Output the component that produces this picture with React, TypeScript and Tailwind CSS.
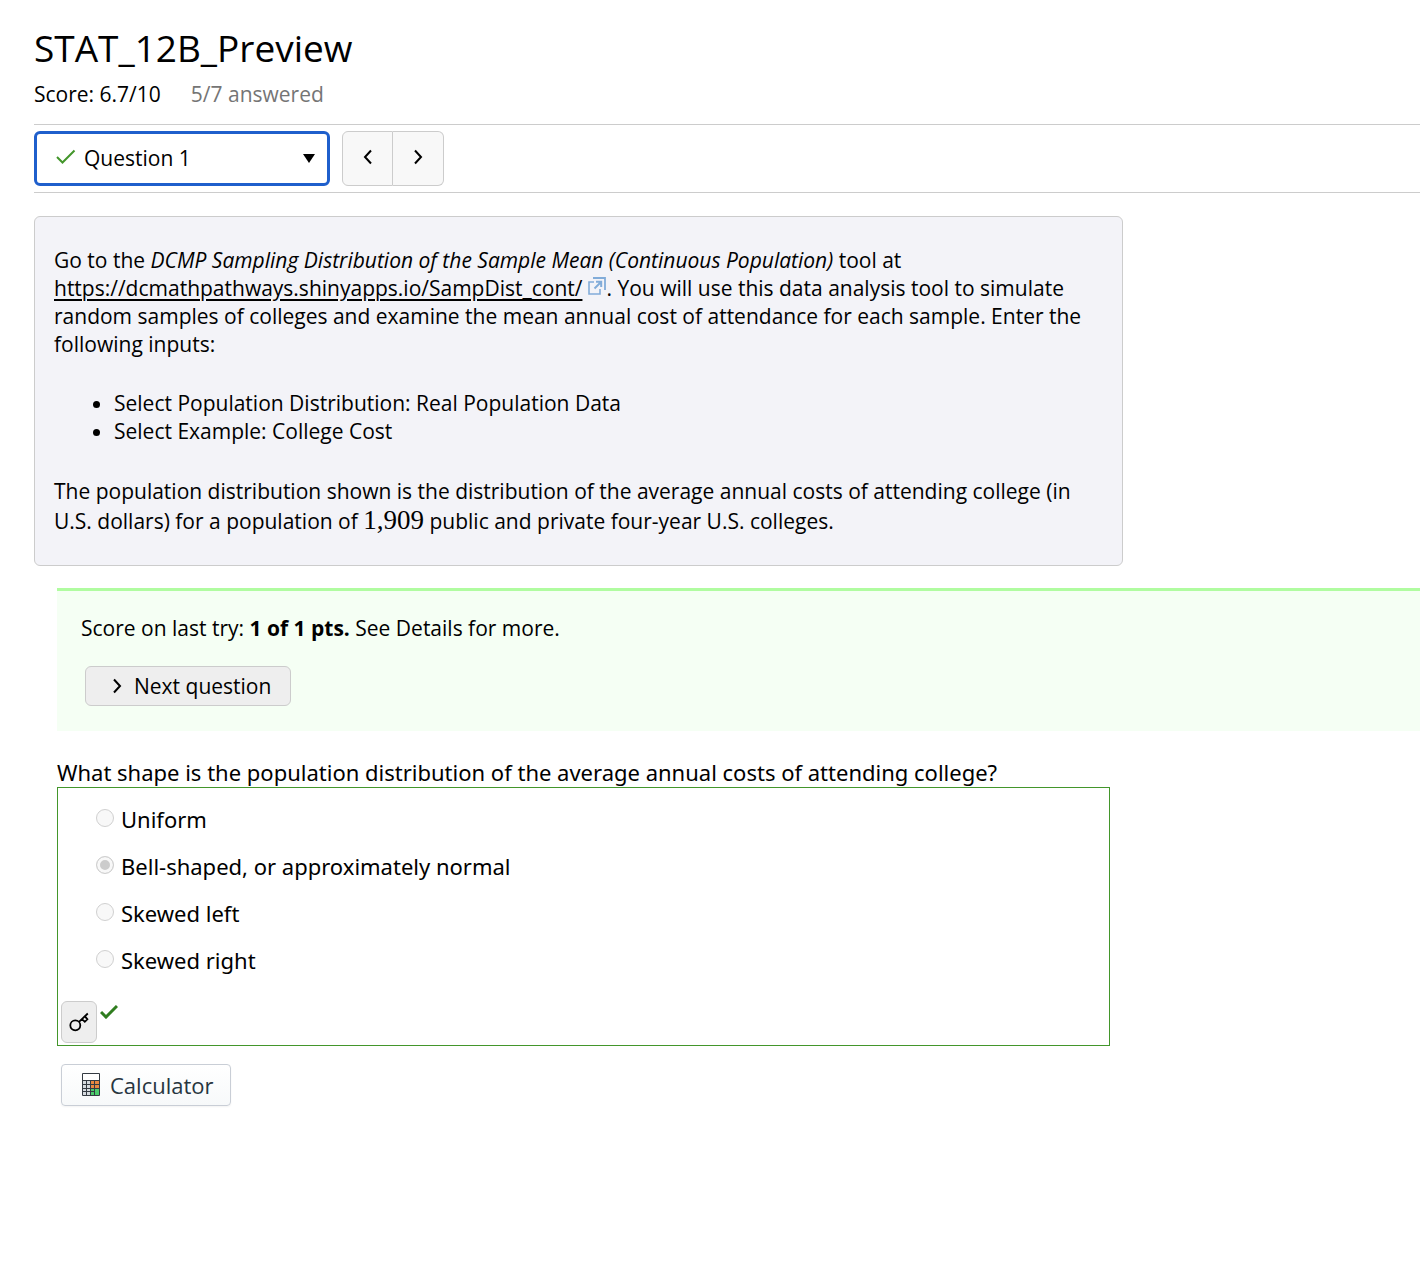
import { useState } from "react";

const answers = [
  "Uniform",
  "Bell-shaped, or approximately normal",
  "Skewed left",
  "Skewed right",
];

function ChevronIcon({ left = false }: { left?: boolean }) {
  return (
    <svg width="10" height="16" viewBox="0 0 10 16" fill="none" aria-hidden="true">
      <path
        d={left ? "M8 1.5 2 8l6 6.5" : "M2 1.5 8 8l-6 6.5"}
        stroke="#000"
        strokeWidth="2"
      />
    </svg>
  );
}

function ExternalIcon() {
  return (
    <svg
      className="mb-px ml-1.5 inline-block align-baseline"
      width="18"
      height="18"
      viewBox="0 0 18 18"
      fill="none"
      aria-hidden="true"
    >
      <path d="M6 5H1v12h11v-5" stroke="#82acd9" strokeWidth="1.6" />
      <path d="M5 1h12v12" stroke="#82acd9" strokeWidth="1.8" />
      <path d="M6.5 11.5 13 5M8 4.8h5.2v5.2" stroke="#82acd9" strokeWidth="2" />
    </svg>
  );
}

function KeyIcon() {
  return (
    <svg width="20" height="20" viewBox="0 0 20 20" fill="none" stroke="#000" aria-hidden="true">
      <circle cx="6.3" cy="13.3" r="5" strokeWidth="1.8" />
      <path d="M10 9.8 18.8 1.5M13 7.2l2.8 2.6 2.6-2.5-2-2.4" strokeWidth="1.8" />
    </svg>
  );
}

function CalculatorIcon() {
  return (
    <svg width="18" height="24" viewBox="0 0 18 24" aria-hidden="true">
      <rect x="0" y="0" width="18" height="23" rx="1" fill="#343b42" />
      <rect x="1" y="1" width="16" height="6" fill="#fff" />
      <path
        fill="#d5dade"
        d="M1 8h3v3H1zM5 8h3v3H5zM1 12h3v3H1zM5 12h3v3H5zM1 16h3v2H1zM5 16h3v2H5zM1 19h3v3H1zM5 19h3v3H5z"
      />
      <path fill="#e9873f" d="M9 8h3v3H9zM13 8h4v3h-4zM9 12h3v3H9zM13 12h4v3h-4z" />
      <path fill="#4ccb6c" d="M9 16h3v2H9zM13 16h4v6h-4zM9 19h3v3H9z" />
    </svg>
  );
}

export default function App() {
  const [question, setQuestion] = useState("1");

  return (
    <main className="pt-[23px] pb-12 pl-[34px] font-['Open_Sans',sans-serif] text-[21px] leading-7 text-black">
      {/* Header */}
      <h1 className="text-[37px] leading-[50px]">STAT_12B_Preview</h1>
      <div className="mt-[7px] flex gap-[30px]">
        <span>Score: 6.7/10</span>
        <span className="text-[#757575]">5/7 answered</span>
      </div>

      {/* Question picker */}
      <nav className="mt-4 flex gap-3 border-y border-[#ccc] py-1.5">
        <div className="relative">
          <select
            aria-label="Question"
            value={question}
            onChange={(e) => setQuestion(e.target.value)}
            className="h-[55px] w-[296px] appearance-none rounded-md border-3 border-[#1f5fcc] bg-white pb-0.5 pl-[47px] outline-none"
          >
            <option value="1">Question 1</option>
            <option value="2">Question 2</option>
            <option value="3">Question 3</option>
          </select>
          <svg
            className="pointer-events-none absolute top-[18px] left-[22px]"
            width="20"
            height="16"
            viewBox="0 0 20 16"
            fill="none"
            aria-hidden="true"
          >
            <path d="M1 8l5.5 5.5L18.5 1.5" stroke="#43962b" strokeWidth="2" />
          </svg>
          <svg
            className="pointer-events-none absolute top-[23px] right-[15px]"
            width="12"
            height="9"
            viewBox="0 0 12 9"
            aria-hidden="true"
          >
            <path d="M0 0h12L6 9z" />
          </svg>
        </div>
        <div className="flex">
          <button
            aria-label="Previous question"
            className="flex h-[55px] w-[51px] items-center justify-center rounded-l-md border border-[#ccc] bg-[#f8f8f8] pb-1"
          >
            <ChevronIcon left />
          </button>
          <button
            aria-label="Next question"
            className="flex h-[55px] w-[51px] items-center justify-center rounded-r-md border border-l-0 border-[#ccc] bg-[#f8f8f8] pb-1"
          >
            <ChevronIcon />
          </button>
        </div>
      </nav>

      {/* Intro text */}
      <section className="mt-[23px] max-w-[1089px] rounded-md border border-[#ccc] bg-[#f3f3f8] px-[19px] pt-[29px] pb-[30px]">
        <p>
          Go to the{" "}
          <em>DCMP Sampling Distribution of the Sample Mean (Continuous Population)</em> tool at{" "}
          <a
            href="https://dcmathpathways.shinyapps.io/SampDist_cont/"
            className="underline decoration-2 underline-offset-3"
          >
            https://dcmathpathways.shinyapps.io/SampDist_cont/
          </a>
          <ExternalIcon />. You will use this data analysis tool to simulate random samples of
          colleges and examine the mean annual cost of attendance for each sample. Enter the
          following inputs:
        </p>
        <ul className="mt-[31px] mb-8 list-disc pl-[60px]">
          <li>Select Population Distribution: Real Population Data</li>
          <li>Select Example: College Cost</li>
        </ul>
        <p>
          The population distribution shown is the distribution of the average annual costs of
          attending college (in U.S. dollars) for a population of{" "}
          <span className="inline-block font-['Liberation_Serif',serif] text-[27px] leading-[30px]">
            1,909
          </span>{" "}
          public and private four-year U.S. colleges.
        </p>
      </section>

      <div className="ml-[23px]">
        {/* Score */}
        <section className="mt-[22px] border-t-3 border-[#b0fca0] bg-[#f5fff4] px-6 pt-[23px] pb-[25px]">
          <p>
            Score on last try: <strong>1 of 1 pts.</strong> See Details for more.
          </p>
          <button className="mt-6 ml-1 flex h-10 items-center gap-3 rounded-md border border-[#ccc] bg-[#eee] pr-[19px] pl-[26px]">
            <ChevronIcon />
            Next question
          </button>
        </section>

        {/* Question */}
        <fieldset className="mt-[27px] max-w-[1053px] font-['Noto_Sans',sans-serif] text-[22px]">
          <legend className="leading-[29px]">
            What shape is the population distribution of the average annual costs of attending
            college?
          </legend>
          <div className="border border-[#43962b] px-[3px] pt-[7px] pb-0.5">
            <ul className="pl-[35px]">
              {answers.map((answer) => (
                <li key={answer}>
                  <label className="flex h-[47px] items-center gap-[7px]">
                    <input
                      type="radio"
                      name="shape"
                      disabled
                      defaultChecked={answer === answers[1]}
                      className="mb-0.5 size-[18px] appearance-none rounded-full border border-[#d0d0d0] bg-[#f8f8f8] checked:bg-[#ccc] checked:shadow-[inset_0_0_0_3px_#f8f8f8]"
                    />
                    {answer}
                  </label>
                </li>
              ))}
            </ul>
            <div className="mt-[18px] flex gap-[3px]">
              <button
                aria-label="Show answer"
                className="flex h-[42px] w-9 items-center justify-center rounded-md border border-[#ccc] bg-[#eee]"
              >
                <KeyIcon />
              </button>
              <svg className="mt-1" width="18" height="14" viewBox="0 0 18 14" fill="none">
                <title>Correct</title>
                <path d="M1 7l5 5L17 1" stroke="#2f7d1f" strokeWidth="3" />
              </svg>
            </div>
          </div>
        </fieldset>

        <button className="mt-[18px] ml-1 flex h-[42px] items-center gap-2.5 rounded-sm border border-[#c9ced6] bg-linear-to-b from-white to-[#f7f9fa] pr-4 pl-5 text-[22px] text-[#273540] shadow-xs">
          <CalculatorIcon />
          Calculator
        </button>
      </div>
    </main>
  );
}
